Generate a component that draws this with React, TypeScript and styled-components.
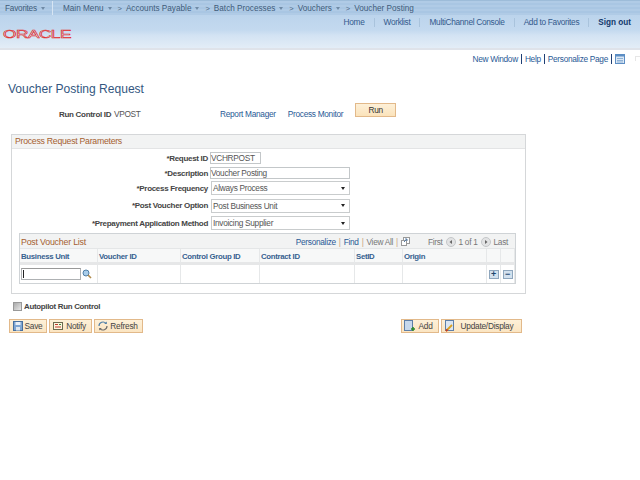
import React from 'react';
import styled, { createGlobalStyle } from 'styled-components';

const GlobalStyle = createGlobalStyle`
  html, body {
    margin: 0;
    padding: 0;
    background: #fff;
    font-family: 'Liberation Sans', Arial, sans-serif;
    font-size: 8.3px;
    letter-spacing: -0.3px;
    color: #333;
  }
`;

const Page = styled.div`
  width: 640px;
  height: 480px;
  overflow: hidden;
  display: flex;
  flex-direction: column;
`;

const MenuBar = styled.div`
  height: 15px;
  display: flex;
  align-items: center;
  background: repeating-linear-gradient(180deg, #b0cbe6 0, #b0cbe6 2px, #a9c6e3 2px, #a9c6e3 4px);
  border-top: 1px solid #9dbcd9;
  box-sizing: border-box;
  color: #3f5c7a;
  font-size: 8.2px;
  letter-spacing: 0;
  white-space: nowrap;
`;

const Favorites = styled.div`
  width: 53px;
  height: 100%;
  padding-left: 5px;
  box-sizing: border-box;
  border-right: 1px solid #d7e5f3;
  display: flex;
  align-items: center;
  letter-spacing: -0.2px;
`;

const Crumb = styled.span<{ $gapLeft: number }>`
  margin-left: ${(p) => p.$gapLeft}px;
`;

const Caret = styled.span`
  width: 0;
  height: 0;
  margin: 1px 0 0 4px;
  display: inline-block;
  border-left: 2.5px solid transparent;
  border-right: 2.5px solid transparent;
  border-top: 3px solid #6f8aa6;
`;

const Sep = styled.span`
  margin-left: 6px;
  font-size: 7.5px;
  color: #4d6884;
`;

const Band = styled.div`
  height: 35px;
  box-sizing: border-box;
  border-bottom: 2px solid #dfe3ea;
  background: linear-gradient(180deg, #bcd4ec 0, #c3d9ef 45%, #d3e3f3 62%, #e3edf7 100%);
  display: flex;
  justify-content: space-between;
`;

const Logo = styled.svg`
  margin: 13px 0 0 2px;
  display: block;
`;

const TopLinks = styled.div`
  display: flex;
  align-items: flex-start;
  padding: 3px 9px 0 0;
`;

const TopLink = styled.span<{ $strong?: boolean }>`
  height: 9px;
  line-height: 9px;
  padding: 0 9px;
  border-left: 1px solid #a9c3dc;
  color: ${(p) => (p.$strong ? '#12386b' : '#33598c')};
  font-weight: ${(p) => (p.$strong ? 700 : 400)};
  &:first-child { border-left: none; }
  &:last-child { padding-right: 0; font-size: 8.2px; letter-spacing: 0; }
`;

const UtilRow = styled.div`
  height: 14px;
  margin-top: 2px;
  padding-right: 15px;
  position: relative;
  display: flex;
  justify-content: flex-end;
  align-items: center;
  color: #2a5a96;
  &::after {
    content: '';
    position: absolute;
    right: 0;
    top: 4px;
    width: 4px;
    height: 4px;
    border-top: 1px solid #e6e6e6;
    border-left: 1px solid #e6e6e6;
  }
`;

const UtilLink = styled.span`
  padding: 0 3px;
  line-height: 10px;
  border-right: 1px solid #1f3f74;
`;

const UtilIcon = styled.span`
  display: flex;
  margin-left: 3px;
`;

const Title = styled.h1`
  margin: 15px 0 0 8px;
  font-size: 12.05px;
  line-height: 16px;
  font-weight: 400;
  letter-spacing: 0;
  color: #34577f;
`;

const RunRow = styled.div`
  height: 16px;
  margin-top: 9px;
  display: flex;
  align-items: center;
`;

const RunLabel = styled.span`
  margin-left: 59px;
  font-size: 8px;
  font-weight: 700;
  color: #444;
  width: 55px;
  white-space: nowrap;
`;

const RunValue = styled.span`
  width: 106px;
  color: #555;
`;

const BlueLink = styled.span<{ $gapLeft?: number }>`
  margin-left: ${(p) => p.$gapLeft ?? 0}px;
  color: #2a5a96;
`;

const RunButton = styled.button`
  width: 41px;
  height: 14px;
  margin: -8px 0 0 12px;
  padding: 0;
  border: 1px solid #e2b98a;
  background: linear-gradient(180deg, #fdf0d8, #fbe3bb);
  font: 8.3px 'Liberation Sans', Arial, sans-serif;
  letter-spacing: -0.25px;
  color: #333;
`;

const GroupBox = styled.section`
  width: 515px;
  height: 160px;
  margin: 12px 0 0 11px;
  box-sizing: border-box;
  border: 1px solid #d5d7d9;
`;

const SectionHead = styled.div`
  height: 14px;
  padding-left: 3px;
  background: #f2f3f3;
  border-bottom: 1px solid #e3e4e5;
  box-sizing: border-box;
  color: #a5602f;
  font-size: 8.7px;
  letter-spacing: -0.25px;
  line-height: 12px;
`;

const FormRow = styled.div<{ $height: number }>`
  height: ${(p) => p.$height}px;
  display: flex;
  align-items: center;
`;

const FormLabel = styled.label`
  width: 196px;
  text-align: right;
  font-size: 8px;
  font-weight: 700;
  color: #444;
  flex: none;
`;

const TextInput = styled.div<{ $width: number }>`
  width: ${(p) => p.$width}px;
  height: 12px;
  margin-left: 2px;
  box-sizing: border-box;
  border: 1px solid #c3c7c9;
  color: #555;
  line-height: 10px;
`;

const SelectBox = styled.div`
  width: 139px;
  height: 14px;
  margin-left: 3px;
  padding: 0 4px 0 1px;
  box-sizing: border-box;
  border: 1px solid #c9cccd;
  display: flex;
  align-items: center;
  justify-content: space-between;
  color: #555;
  &::after {
    content: '';
    border-left: 2.5px solid transparent;
    border-right: 2.5px solid transparent;
    border-top: 3px solid #222;
  }
`;

const Grid = styled.div`
  width: 497px;
  margin: 1px 0 0 7px;
  box-sizing: border-box;
  border: 1px solid #cfd3d6;
`;

const GridTitle = styled.div`
  height: 14px;
  padding: 1px 2px 0 1px;
  box-sizing: border-box;
  background: #f2f3f3;
  display: flex;
  align-items: center;
  justify-content: space-between;
  color: #a5602f;
  font-size: 8.8px;
  letter-spacing: -0.2px;
`;

const GridNav = styled.div`
  display: flex;
  align-items: center;
  gap: 3px;
  color: #777;
  font-size: 8.3px;
  letter-spacing: -0.3px;
  margin-right: 5px;
`;

const NavLink = styled.span`
  color: #2a5a96;
`;

const NavDivider = styled.span`
  color: #c9a47f;
`;

const NavFirst = styled.span`
  margin-left: 15px;
`;

const Columns = '78px 83px 79px 95px 48px 84px 14px 14px';

const HeadRow = styled.div`
  display: grid;
  grid-template-columns: ${Columns};
  height: 17px;
  border-top: 1px solid #e4e6e7;
  border-bottom: 3px solid #e6e7e8;
  box-sizing: border-box;
  background: #f7f8f8;
`;

const HeadCell = styled.div`
  padding: 1px 0 0 1px;
  border-right: 1px solid #e6e8e9;
  color: #36618f;
  font-size: 7.8px;
  font-weight: 700;
  line-height: 13px;
  white-space: nowrap;
`;

const BodyRow = styled.div`
  display: grid;
  grid-template-columns: ${Columns};
  height: 18px;
`;

const BodyCell = styled.div`
  border-right: 1px solid #e6e8e9;
  display: flex;
  align-items: center;
  justify-content: center;
`;

const UnitCell = styled(BodyCell)`
  justify-content: flex-start;
  padding-left: 1px;
  gap: 1px;
`;

const UnitInput = styled.div`
  width: 60px;
  height: 12px;
  box-sizing: border-box;
  border: 1px solid #aeb1b3;
  border-top-color: #999;
  &::before {
    content: '';
    display: block;
    width: 1px;
    height: 8px;
    margin: 1px 0 0 1px;
    background: #222;
  }
`;

const RowButton = styled.div`
  width: 8px;
  height: 7px;
  border: 1px solid #8ea6bd;
  background: #d3e1ee;
  color: #21466e;
  display: flex;
  align-items: center;
  justify-content: center;
  font: 700 9px/7px 'Liberation Sans', Arial, sans-serif;
`;

const AutopilotRow = styled.div`
  height: 12px;
  margin: 6px 0 0 13px;
  display: flex;
  align-items: center;
  gap: 2px;
  font-size: 7.9px;
  font-weight: 700;
  color: #444;
`;

const Check = styled.span`
  width: 7px;
  height: 7px;
  border: 1px solid #999;
  background: linear-gradient(135deg, #aaa, #e8e8e8);
`;

const ActionBar = styled.div`
  height: 14px;
  margin: 7px 0 0 9px;
  width: 513px;
  display: flex;
  gap: 2px;
`;

const Action = styled.button<{ $width: number }>`
  width: ${(p) => p.$width}px;
  height: 14px;
  padding: 0 3px 0 2px;
  box-sizing: border-box;
  border: 1px solid #e2b98a;
  background: linear-gradient(180deg, #fdf0d8, #fbe5c2);
  display: flex;
  align-items: center;
  font: 8.3px 'Liberation Sans', Arial, sans-serif;
  letter-spacing: -0.25px;
  color: #444;
`;

const ActionText = styled.span`
  flex: 1;
  text-align: center;
`;

const ActionSpacer = styled.div`
  flex: 1;
`;

const CalendarIcon = () => (
  <svg width="10" height="10" viewBox="0 0 10 10">
    <rect x="0.5" y="0.5" width="9" height="9" fill="#dce8f4" stroke="#5d8ec4" />
    <rect x="0.5" y="0.5" width="9" height="2" fill="#5d8ec4" />
    <path d="M2 4.5h6M2 6.5h6M2 8h6" stroke="#8fb2d6" />
  </svg>
);

const MagnifierIcon = () => (
  <svg width="10" height="10" viewBox="0 0 10 10">
    <circle cx="4" cy="4" r="3" fill="#a9cdea" stroke="#4f7fa8" />
    <path d="M6 6l3 3" stroke="#b08a4a" strokeWidth="1.6" />
  </svg>
);

const NewWindowIcon = () => (
  <svg width="9" height="9" viewBox="0 0 9 9">
    <rect x="2.5" y="0.5" width="6" height="6" fill="#fff" stroke="#999" />
    <rect x="0.5" y="3.5" width="5" height="5" fill="#fff" stroke="#999" />
    <path d="M3 5l3-3M4 2h2v2" stroke="#5a7ea6" fill="none" />
  </svg>
);

const ArrowCircle = ({ right }: { right?: boolean }) => (
  <svg width="10" height="10" viewBox="0 0 10 10">
    <circle cx="5" cy="5" r="4.5" fill="#e2e3e4" stroke="#c4c6c8" />
    <path d={right ? 'M4 3l2.5 2L4 7z' : 'M6 3L3.5 5 6 7z'} fill="#666" />
  </svg>
);

const SaveIcon = () => (
  <svg width="12" height="12" viewBox="0 0 12 12">
    <rect x="1.5" y="1.5" width="9" height="9" fill="#7fa6d2" stroke="#47709f" />
    <rect x="3.5" y="2" width="5" height="3" fill="#e8f0f8" />
    <rect x="4" y="7" width="4" height="3.5" fill="#dfe7ef" />
  </svg>
);

const NotifyIcon = () => (
  <svg width="12" height="12" viewBox="0 0 12 12">
    <rect x="1.5" y="2.5" width="9" height="7" fill="#fdf6df" stroke="#6b6b4f" />
    <path d="M3 4.5h3M3 7h6" stroke="#c0392b" />
    <path d="M7 4.5h2" stroke="#3a8a3a" />
  </svg>
);

const RefreshIcon = () => (
  <svg width="12" height="12" viewBox="0 0 12 12" fill="none">
    <path d="M2 6a4 4 0 0 1 7-2.6" stroke="#4f7fa8" strokeWidth="1.2" />
    <path d="M10 6a4 4 0 0 1-7 2.6" stroke="#6d6d6d" strokeWidth="1.2" />
    <path d="M9.8 1.5v2.6H7.2z" fill="#4f7fa8" />
    <path d="M2.2 10.5V7.9h2.6z" fill="#6d6d6d" />
  </svg>
);

const AddIcon = () => (
  <svg width="12" height="12" viewBox="0 0 12 12">
    <rect x="0.5" y="0.5" width="8" height="10" fill="#c6d8ec" stroke="#5d7fa8" />
    <path d="M9 7v4M7 9h4" stroke="#2f8a2f" strokeWidth="1.6" />
  </svg>
);

const UpdateIcon = () => (
  <svg width="12" height="12" viewBox="0 0 12 12">
    <rect x="1.5" y="0.5" width="8" height="10" fill="#dbe6f2" stroke="#5d7fa8" />
    <path d="M2 11l6-6" stroke="#d9a021" strokeWidth="1.8" />
    <path d="M2 11l1.5-1.5" stroke="#c0392b" strokeWidth="1.8" />
  </svg>
);

const headers = ['Business Unit', 'Voucher ID', 'Control Group ID', 'Contract ID', 'SetID', 'Origin', '', ''];

const App = () => (
  <Page>
    <GlobalStyle />
    <MenuBar>
      <Favorites>Favorites<Caret /></Favorites>
      <Crumb $gapLeft={10}>Main Menu</Crumb><Caret />
      <Sep>&gt;</Sep><Crumb $gapLeft={4}>Accounts Payable</Crumb><Caret />
      <Sep>&gt;</Sep><Crumb $gapLeft={4}>Batch Processes</Crumb><Caret />
      <Sep>&gt;</Sep><Crumb $gapLeft={4}>Vouchers</Crumb><Caret />
      <Sep>&gt;</Sep><Crumb $gapLeft={4}>Voucher Posting</Crumb>
    </MenuBar>
    <Band>
      <Logo width="72" height="11" viewBox="0 0 72 11">
        <text x="1" y="9.5" textLength="68" lengthAdjust="spacingAndGlyphs" fontFamily="Liberation Sans" fontSize="10.5" fill="none" stroke="#e2231a" strokeWidth="0.5">ORACLE</text>
      </Logo>
      <TopLinks>
        <TopLink>Home</TopLink>
        <TopLink>Worklist</TopLink>
        <TopLink>MultiChannel Console</TopLink>
        <TopLink>Add to Favorites</TopLink>
        <TopLink $strong>Sign out</TopLink>
      </TopLinks>
    </Band>
    <UtilRow>
      <UtilLink>New Window</UtilLink>
      <UtilLink>Help</UtilLink>
      <UtilLink>Personalize Page</UtilLink>
      <UtilIcon><CalendarIcon /></UtilIcon>
    </UtilRow>
    <Title>Voucher Posting Request</Title>
    <RunRow>
      <RunLabel>Run Control ID</RunLabel>
      <RunValue>VPOST</RunValue>
      <BlueLink>Report Manager</BlueLink>
      <BlueLink $gapLeft={12}>Process Monitor</BlueLink>
      <RunButton>Run</RunButton>
    </RunRow>
    <GroupBox>
      <SectionHead>Process Request Parameters</SectionHead>
      <FormRow $height={18}>
        <FormLabel>*Request ID</FormLabel>
        <TextInput $width={51}>VCHRPOST</TextInput>
      </FormRow>
      <FormRow $height={12}>
        <FormLabel>*Description</FormLabel>
        <TextInput $width={140}>Voucher Posting</TextInput>
      </FormRow>
      <FormRow $height={18}>
        <FormLabel>*Process Frequency</FormLabel>
        <SelectBox>Always Process</SelectBox>
      </FormRow>
      <FormRow $height={17}>
        <FormLabel>*Post Voucher Option</FormLabel>
        <SelectBox>Post Business Unit</SelectBox>
      </FormRow>
      <FormRow $height={18}>
        <FormLabel>*Prepayment Application Method</FormLabel>
        <SelectBox>Invoicing Supplier</SelectBox>
      </FormRow>
      <Grid>
        <GridTitle>
          Post Voucher List
          <GridNav>
            <NavLink>Personalize</NavLink>
            <NavDivider>|</NavDivider>
            <NavLink>Find</NavLink>
            <NavDivider>|</NavDivider>
            <span>View All</span>
            <NavDivider>|</NavDivider>
            <NewWindowIcon />
            <NavFirst>First</NavFirst>
            <ArrowCircle />
            <span>1 of 1</span>
            <ArrowCircle right />
            <span>Last</span>
          </GridNav>
        </GridTitle>
        <HeadRow>
          {headers.map((h, i) => <HeadCell key={i}>{h}</HeadCell>)}
        </HeadRow>
        <BodyRow>
          <UnitCell><UnitInput /><MagnifierIcon /></UnitCell>
          <BodyCell /><BodyCell /><BodyCell /><BodyCell /><BodyCell />
          <BodyCell><RowButton>+</RowButton></BodyCell>
          <BodyCell><RowButton>−</RowButton></BodyCell>
        </BodyRow>
      </Grid>
    </GroupBox>
    <AutopilotRow><Check />Autopilot Run Control</AutopilotRow>
    <ActionBar>
      <Action $width={38}><SaveIcon /><ActionText>Save</ActionText></Action>
      <Action $width={43}><NotifyIcon /><ActionText>Notify</ActionText></Action>
      <Action $width={49}><RefreshIcon /><ActionText>Refresh</ActionText></Action>
      <ActionSpacer />
      <Action $width={38}><AddIcon /><ActionText>Add</ActionText></Action>
      <Action $width={81}><UpdateIcon /><ActionText>Update/Display</ActionText></Action>
    </ActionBar>
  </Page>
);

export default App;
